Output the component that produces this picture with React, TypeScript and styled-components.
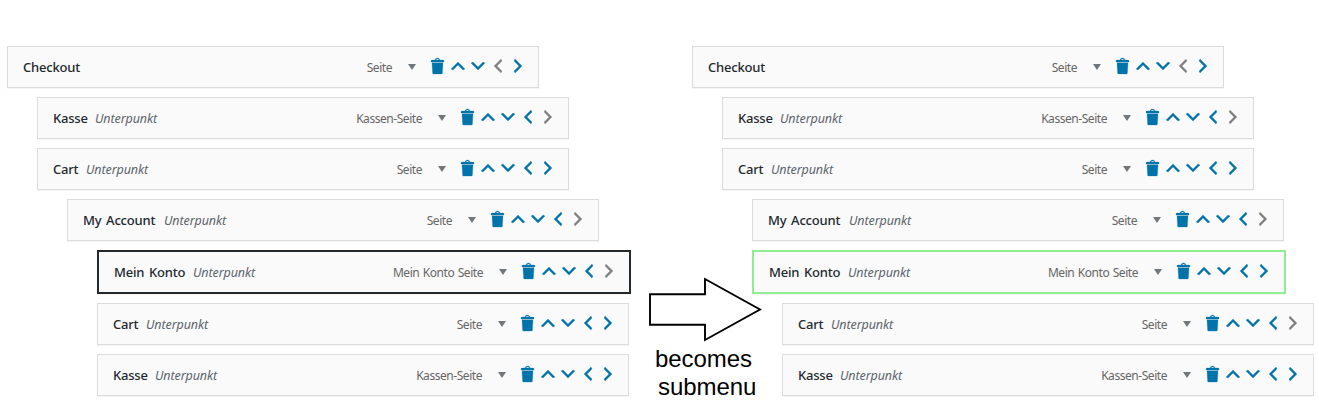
import React from "react";
import styled, { createGlobalStyle } from "styled-components";

const GlobalStyle = createGlobalStyle`
  * { box-sizing: border-box; }
  body { margin: 0; background: #fff; }
`;

const Page = styled.main`
  display: flex;
  align-items: flex-start;
  width: 1319px;
  height: 420px;
  padding: 46px 0 0 7px;
  overflow: hidden;
  font-family: "Noto Sans", "Open Sans", sans-serif;
  font-size: 13px;
`;

const MenuList = styled.ul`
  display: flex;
  flex-direction: column;
  gap: 9px;
  flex: none;
  width: 624px;
  margin: 0;
  padding: 0;
  list-style: none;
`;

type Mark = "dark" | "green";

const MenuRow = styled.li<{ $depth: number; $mark?: Mark }>`
  display: flex;
  align-items: flex-start;
  flex: none;
  width: ${(p) => (p.$mark ? 534 : 532)}px;
  height: ${(p) => (p.$mark ? 44 : 42)}px;
  margin-left: ${(p) => p.$depth * 30}px;
  padding: 9px 10px 0 15px;
  background: #fafafa;
  border: ${(p) =>
    p.$mark === "dark" ? "2px solid #23282d" : p.$mark === "green" ? "2px solid #90ee90" : "1px solid #dcdcde"};
  box-shadow: 0 1px 1px rgba(0, 0, 0, 0.04);
  white-space: nowrap;
  line-height: 20px;
`;

const Title = styled.span<{ $width: number }>`
  flex: none;
  width: ${(p) => p.$width}px;
  padding-top: 1px;
  color: #23282d;
  font-weight: 500;
  letter-spacing: -0.2px;
  word-spacing: 1.5px;
`;

const SubLabel = styled.em`
  padding-top: 2px;
  color: #5c646b;
  font-size: 12.5px;
  letter-spacing: -0.1px;
`;

const Kind = styled.span`
  margin-left: auto;
  padding-top: 2px;
  color: #666;
  font-size: 12px;
  letter-spacing: -0.45px;
  word-spacing: 0.8px;
`;

const Caret = styled.svg`
  flex: none;
  width: 20px;
  height: 20px;
  margin: 0 7px 0 9px;
  fill: #72777c;
`;

const Actions = styled.div`
  display: flex;
  flex: none;
`;

const ActionIcon = styled.svg<{ $disabled?: boolean }>`
  width: 20px;
  height: 20px;
  fill: ${(p) => (p.$disabled ? "#808080" : "#0073aa")};
  stroke: ${(p) => (p.$disabled ? "#808080" : "#0073aa")};
  stroke-width: 0.25px;
`;

const Transition = styled.section`
  flex: none;
  display: flex;
  flex-direction: column;
  width: 61px;
  padding-top: 230px;
`;

const Arrow = styled.svg`
  flex: none;
  width: 116px;
  height: 68px;
  margin-left: 16px;
  position: relative;
  z-index: 1;
`;

const Caption = styled.p`
  position: relative;
  z-index: 1;
  display: flex;
  flex-direction: column;
  margin: 1px 0 0 24px;
  color: #000;
  font-family: "Liberation Sans", Arial, sans-serif;
  font-size: 24px;
  line-height: 28px;
  letter-spacing: -0.05px;
  white-space: nowrap;
`;

const CaptionIndent = styled.span`
  padding-left: 3px;
`;

const icons = {
  trash:
    "M12 4h3c.6 0 1 .4 1 1v1H3V5c0-.6.5-1 1-1h3c.2-1.1 1.3-2 2.5-2s2.3.9 2.5 2zM8 4h3c-.2-.6-.9-1-1.5-1S8.2 3.4 8 4zM4 6.8h11l-.6 10.4c0 .5-.4.8-.8.8H5.4c-.5 0-.8-.4-.8-.8L4 6.8z",
  up: "M15 14l-5-5-5 5-2-1 7-7 7 7z",
  down: "M5 6l5 5 5-5 2 1-7 7-7-7z",
  left: "M14 5l-5 5 5 5-1 2-7-7 7-7z",
  right: "M6 15l5-5-5-5 1-2 7 7-7 7z",
};

const titleWidths: Record<string, number> = {
  Checkout: 72,
  Kasse: 42,
  Cart: 33,
  "My Account": 81,
  "Mein Konto": 79,
};

interface Item {
  title: string;
  kind: string;
  depth: number;
  top?: boolean;
  mark?: Mark;
  off?: "left" | "right";
}

const before: Item[] = [
  { title: "Checkout", kind: "Seite", depth: 0, top: true, off: "left" },
  { title: "Kasse", kind: "Kassen-Seite", depth: 1, off: "right" },
  { title: "Cart", kind: "Seite", depth: 1 },
  { title: "My Account", kind: "Seite", depth: 2, off: "right" },
  { title: "Mein Konto", kind: "Mein Konto Seite", depth: 3, mark: "dark", off: "right" },
  { title: "Cart", kind: "Seite", depth: 3 },
  { title: "Kasse", kind: "Kassen-Seite", depth: 3 },
];

const after: Item[] = [
  { title: "Checkout", kind: "Seite", depth: 0, top: true, off: "left" },
  { title: "Kasse", kind: "Kassen-Seite", depth: 1, off: "right" },
  { title: "Cart", kind: "Seite", depth: 1 },
  { title: "My Account", kind: "Seite", depth: 2, off: "right" },
  { title: "Mein Konto", kind: "Mein Konto Seite", depth: 2, mark: "green" },
  { title: "Cart", kind: "Seite", depth: 3, off: "right" },
  { title: "Kasse", kind: "Kassen-Seite", depth: 3 },
];

function Icon({ name, disabled }: { name: keyof typeof icons; disabled?: boolean }) {
  return (
    <ActionIcon viewBox="0 0 20 20" $disabled={disabled}>
      <path d={icons[name]} />
    </ActionIcon>
  );
}

function Menu({ items }: { items: Item[] }) {
  return (
    <MenuList>
      {items.map((item, i) => (
        <MenuRow key={i} $depth={item.depth} $mark={item.mark}>
          <Title $width={titleWidths[item.title]}>{item.title}</Title>
          {!item.top && <SubLabel>Unterpunkt</SubLabel>}
          <Kind>{item.kind}</Kind>
          <Caret viewBox="0 0 20 20">
            <path d="M15 8l-4.03 6L7 8h8z" />
          </Caret>
          <Actions>
            <Icon name="trash" />
            <Icon name="up" />
            <Icon name="down" />
            <Icon name="left" disabled={item.off === "left"} />
            <Icon name="right" disabled={item.off === "right"} />
          </Actions>
        </MenuRow>
      ))}
    </MenuList>
  );
}

export default function App() {
  return (
    <>
      <GlobalStyle />
      <Page>
        <Menu items={before} />
        <Transition>
          <Arrow viewBox="0 0 116 68">
            <path d="M3 18.3H58V3L113 33.5L58 64V48.8H3Z" fill="#fff" stroke="#000" strokeWidth="1.9" />
          </Arrow>
          <Caption>
            <span>becomes</span>
            <CaptionIndent>submenu</CaptionIndent>
          </Caption>
        </Transition>
        <Menu items={after} />
      </Page>
    </>
  );
}
